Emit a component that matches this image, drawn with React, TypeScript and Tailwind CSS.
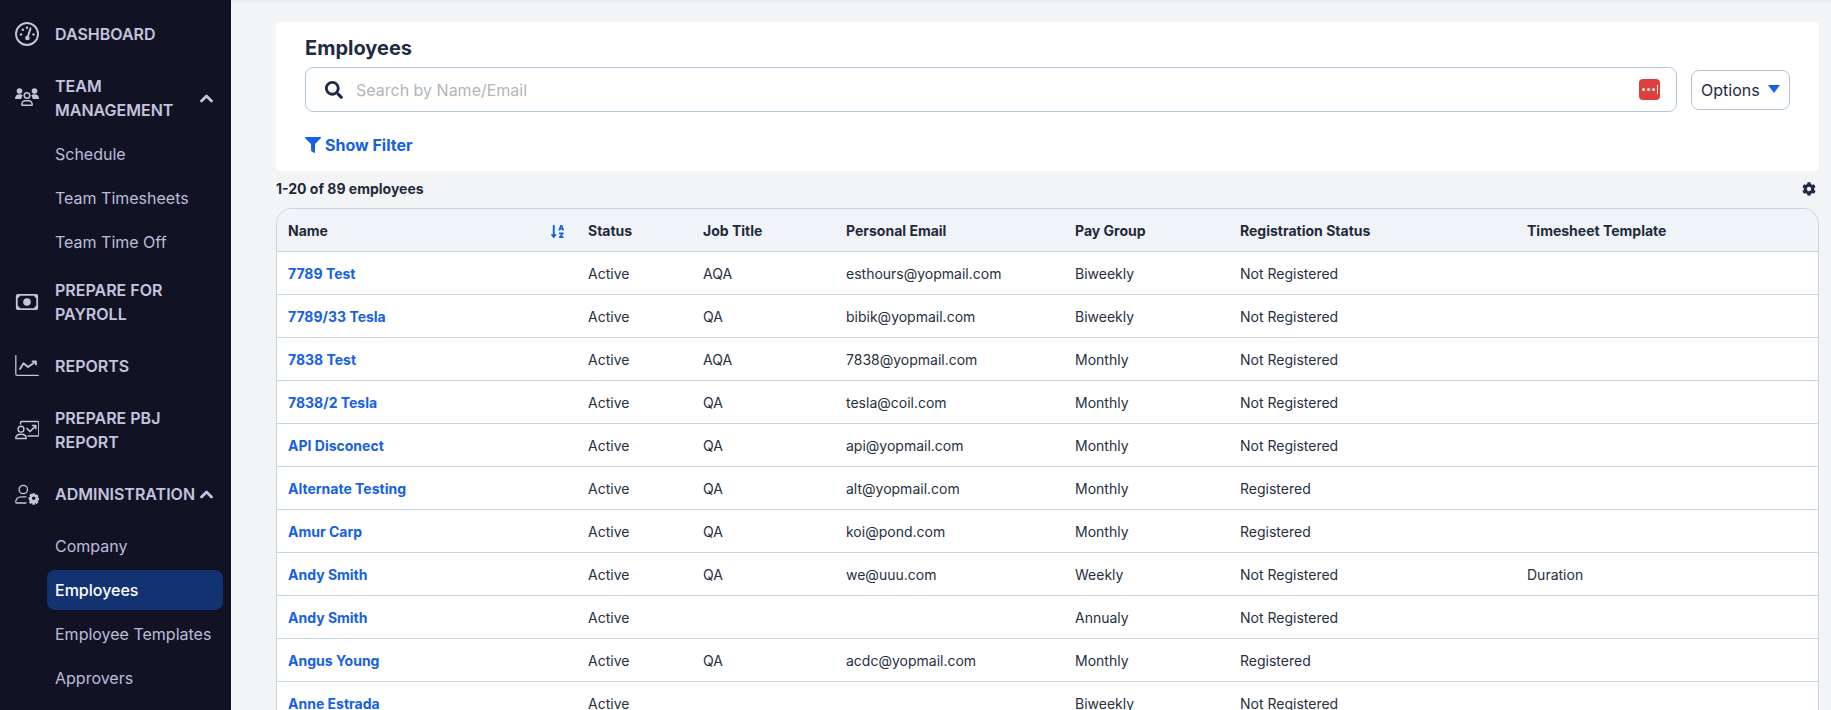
import React from 'react';
import { FaSearch, FaFilter, FaCog, FaSortAlphaDown } from 'react-icons/fa';

const font = { fontFamily: 'Inter, sans-serif' };

const DashboardIcon = () => (
  <svg viewBox="0 0 24 24" className="w-6 h-6 shrink-0" fill="none" stroke="currentColor" strokeWidth="1.9" strokeLinecap="round">
    <circle cx="12" cy="12" r="11" />
    <path d="M15.500 6.500 13 14" strokeWidth="2" />
    <circle cx="12.400" cy="16" r="2.300" fill="currentColor" stroke="none" />
    <circle cx="6" cy="12.500" r="1.200" fill="currentColor" stroke="none" />
    <circle cx="7.800" cy="7.800" r="1.200" fill="currentColor" stroke="none" />
    <circle cx="12" cy="5.800" r="1.200" fill="currentColor" stroke="none" />
    <circle cx="18.500" cy="12.500" r="1.200" fill="currentColor" stroke="none" />
  </svg>
);

const TeamIcon = () => (
  <svg viewBox="0 0 24 24" className="w-6 h-6 shrink-0" fill="none" stroke="currentColor" strokeWidth="1.500">
    <circle cx="4.500" cy="5" r="2.800" fill="currentColor" stroke="none" />
    <circle cx="19.500" cy="5" r="2.800" fill="currentColor" stroke="none" />
    <path d="M0 13c0-3 1.500-4.800 4.500-4.800 1.500 0 2.500.5 3.200 1.400-.8.8-1.200 2-1.400 3.400z" fill="currentColor" stroke="none" />
    <path d="M24 13c0-3-1.500-4.800-4.500-4.800-1.500 0-2.500.5-3.200 1.400.8.8 1.200 2 1.400 3.400z" fill="currentColor" stroke="none" />
    <circle cx="12" cy="9.500" r="2.800" />
    <path d="M6.800 18.800c0-2.500 1.800-4 3.600-4h3.200c1.800 0 3.600 1.500 3.600 4 0 .3-.2.500-.5.500H7.300c-.3 0-.5-.2-.5-.5z" />
  </svg>
);

const MoneyIcon = () => (
  <svg viewBox="0 0 24 24" className="w-6 h-6 shrink-0" fill="none" stroke="currentColor" strokeWidth="1.800">
    <rect x="1.800" y="4.900" width="20.400" height="14.200" rx="1" />
    <path d="M1.800 8c1.700 0 2.800-1.200 2.800-3.100H1.800zM22.200 8c-1.700 0-2.800-1.200-2.800-3.100h2.800zM1.800 16c1.700 0 2.800 1.200 2.800 3.100H1.800zM22.200 16c-1.700 0-2.800 1.200-2.800 3.100h2.800z" fill="currentColor" strokeWidth="0.500" />
    <circle cx="12" cy="12" r="3.800" fill="currentColor" stroke="none" />
  </svg>
);

const ReportsIcon = () => (
  <svg viewBox="0 0 24 24" className="w-6 h-6 shrink-0" fill="none" stroke="currentColor" strokeWidth="1.300" strokeLinecap="round" strokeLinejoin="round">
    <path d="M.8 1.700v18.300c0 .8.5 1.300 1.300 1.300h21.300" />
    <path d="M5 15 8.500 9.200 13 13l7.500-5.300" strokeWidth="1.800" />
    <path d="M17.500 7.300h3.500v3.200" strokeWidth="1.800" />
  </svg>
);

const PbjIcon = () => (
  <svg viewBox="0 0 24 24" className="w-6 h-6 shrink-0" fill="none" stroke="currentColor" strokeWidth="1.400" strokeLinecap="round" strokeLinejoin="round">
    <circle cx="6" cy="11.200" r="2.900" />
    <path d="M.7 20.500c0-2.800 1.800-4.200 5.300-4.200s5.300 1.400 5.300 4.200z" />
    <path d="M5.500 6V4.500c0-.6.400-1 1-1h16.300c.6 0 1 .4 1 1v12.500c0 .6-.4 1-1 1H13" />
    <path d="M12 10.500l3 3 5.500-5.500" strokeWidth="1.700" />
    <path d="M17.500 7.500h3.300v3.300" strokeWidth="1.500" />
  </svg>
);

const AdminIcon = () => (
  <svg viewBox="0 0 24 24" className="w-6 h-6 shrink-0" fill="none" stroke="currentColor" strokeWidth="1.300" strokeLinecap="round" strokeLinejoin="round">
    <circle cx="8.300" cy="7.500" r="4.200" />
    <path d="M.7 20c0-3 2.500-5.200 5.300-5.200h5M.7 20c0 .6.400 1 1 1H11" />
    <g transform="translate(18.700 16.300)" fill="currentColor" stroke="none">
      <path d="M-1.200-5h2.400l.4 1.600 1.500-.7 1.600 1.700-.8 1.500 1.600.5v2.400l-1.600.4.800 1.500-1.600 1.700-1.500-.8-.4 1.700h-2.400l-.4-1.700-1.500.8-1.600-1.700.8-1.500L-5.100 1.300v-2.400l1.600-.5-.8-1.500 1.600-1.700 1.500.7z" />
      <circle r="1.700" fill="#111325" />
    </g>
  </svg>
);

const ChevronIcon = () => (
  <svg viewBox="0 0 13 10" className="w-[13px] h-[10px] shrink-0" fill="none" stroke="currentColor" strokeWidth="2.800" strokeLinecap="round" strokeLinejoin="round">
    <path d="M1.500 8 6.500 3l5 5" />
  </svg>
);

const LastPassIcon = () => (
  <span className="flex items-center justify-center gap-[2px] w-[21px] h-[21px] rounded-[4px] bg-[#dd403c]">
    <span className="w-[3px] h-[3px] rounded-full bg-white" />
    <span className="w-[3px] h-[3px] rounded-full bg-white" />
    <span className="w-[3px] h-[3px] rounded-full bg-white" />
    <span className="w-px h-[9px] bg-white" />
  </span>
);

type TopItemProps = {
  icon: React.ReactNode;
  label: React.ReactNode;
  chevron?: boolean;
  className?: string;
};

const TopItem: React.FC<TopItemProps> = ({ icon, label, chevron, className = '' }) => (
  <div className={`flex items-center pl-[15px] pr-[18px] py-[10px] text-[#c4c4de] ${className}`}>
    {icon}
    <div className="ml-4 flex-1 text-base leading-6 font-semibold uppercase">{label}</div>
    {chevron && <ChevronIcon />}
  </div>
);

const SubItem: React.FC<{ label: string; active?: boolean; className?: string }> = ({ label, active, className = '' }) => (
  <div className={`ml-[47px] mr-2 h-10 flex items-center px-2 rounded-lg text-base ${active ? 'bg-[#123272] text-white font-medium' : 'text-[#bcbcda]'} ${className}`}>
    {label}
  </div>
);

const Sidebar = () => (
  <aside className="w-[231px] shrink-0 bg-[#111325] pt-3">
    <TopItem icon={<DashboardIcon />} label="Dashboard" />
    <TopItem icon={<TeamIcon />} label="Team Management" chevron className="mt-2" />
    <SubItem label="Schedule" className="mt-[2px]" />
    <SubItem label="Team Timesheets" className="mt-1" />
    <SubItem label="Team Time Off" className="mt-1" />
    <TopItem icon={<MoneyIcon />} label="Prepare for Payroll" className="mt-[6px]" />
    <TopItem icon={<ReportsIcon />} label="Reports" className="mt-2" />
    <TopItem icon={<PbjIcon />} label="Prepare PBJ Report" className="mt-2" />
    <TopItem icon={<AdminIcon />} label="Administration" chevron className="mt-2" />
    <SubItem label="Company" className="mt-[10px]" />
    <SubItem label="Employees" active className="mt-1" />
    <SubItem label="Employee Templates" className="mt-1" />
    <SubItem label="Approvers" className="mt-1" />
  </aside>
);

const employees = [
  ['7789 Test', 'Active', 'AQA', 'esthours@yopmail.com', 'Biweekly', 'Not Registered', ''],
  ['7789/33 Tesla', 'Active', 'QA', 'bibik@yopmail.com', 'Biweekly', 'Not Registered', ''],
  ['7838 Test', 'Active', 'AQA', '7838@yopmail.com', 'Monthly', 'Not Registered', ''],
  ['7838/2 Tesla', 'Active', 'QA', 'tesla@coil.com', 'Monthly', 'Not Registered', ''],
  ['API Disconect', 'Active', 'QA', 'api@yopmail.com', 'Monthly', 'Not Registered', ''],
  ['Alternate Testing', 'Active', 'QA', 'alt@yopmail.com', 'Monthly', 'Registered', ''],
  ['Amur Carp', 'Active', 'QA', 'koi@pond.com', 'Monthly', 'Registered', ''],
  ['Andy Smith', 'Active', 'QA', 'we@uuu.com', 'Weekly', 'Not Registered', 'Duration'],
  ['Andy Smith', 'Active', '', '', 'Annualy', 'Not Registered', ''],
  ['Angus Young', 'Active', 'QA', 'acdc@yopmail.com', 'Monthly', 'Registered', ''],
  ['Anne Estrada', 'Active', '', '', 'Biweekly', 'Not Registered', ''],
];

const gridCols = 'grid grid-cols-[300px_115px_143px_229px_165px_287px_1fr] pl-[11px]';

const EmployeeTable = () => (
  <div className="border border-b-0 border-[#c5d5e4] rounded-t-2xl bg-white">
    <div className={`${gridCols} h-[43px] pt-[2px] items-center bg-[#f0f3f7] rounded-t-2xl text-sm font-bold text-[#1f2a3c] border-b border-[#c5d5e4]`}>
      <div className="flex items-center justify-between pr-[23px]">
        Name
        <FaSortAlphaDown className="w-[15px] h-[15px] text-[#1660d8]" />
      </div>
      <div>Status</div>
      <div>Job Title</div>
      <div>Personal Email</div>
      <div>Pay Group</div>
      <div>Registration Status</div>
      <div>Timesheet Template</div>
    </div>
    {employees.map((row, i) => (
      <div key={i} className={`${gridCols} h-[43px] pt-[2px] items-center text-sm text-[#263040] border-b border-[#c5d5e4]`}>
        <div className="font-bold text-[#1660e4]">{row[0]}</div>
        {row.slice(1).map((cell, j) => (
          <div key={j}>{cell}</div>
        ))}
      </div>
    ))}
  </div>
);

export default function App() {
  return (
    <div className="flex h-[710px] overflow-hidden bg-[#f3f4f6]" style={font}>
      <Sidebar />
      <main className="flex-1 min-w-0 flex flex-col">
        <div className="h-[5px] shrink-0 bg-gradient-to-b from-[#ebecee] to-[#f3f4f6]" />
        <div className="pl-[45px] pr-3 pt-[17px]">
          <section className="bg-white rounded px-[29px] pt-[13px] h-[149px]">
            <h1 className="text-xl leading-[26px] font-bold text-[#1f2a44]">Employees</h1>
            <div className="flex items-center mt-[6px] gap-[14px]">
              <div className="flex-1 h-[45px] flex items-center border border-[#b4c7da] rounded-lg pl-[19px] pr-4">
                <FaSearch className="w-[18px] h-[18px] text-[#1f2a44]" />
                <span className="ml-[13px] flex-1 text-base text-[#b3b5ba]">Search by Name/Email</span>
                <LastPassIcon />
              </div>
              <div className="w-[99px] h-10 flex items-center pl-[9px] gap-2 border border-[#b4c7da] rounded-lg text-base text-[#1f2a44]">
                Options
                <svg viewBox="0 0 12 8" className="w-3 h-2 mb-[2px] text-[#1660e4]" fill="currentColor">
                  <path d="M0 0h12L6 8z" />
                </svg>
              </div>
            </div>
            <div className="flex items-center mt-[21px] text-[#1660e4] text-base font-bold">
              <FaFilter className="w-4 h-4 mr-[4px]" />
              Show Filter
            </div>
          </section>
          <div className="flex items-center justify-between h-[37px] pb-[2px] pr-[3px] text-sm font-bold text-[#1f2a3c]">
            <span>1-20 of 89 employees</span>
            <FaCog className="w-[14px] h-[14px] text-[#1f2a44]" />
          </div>
          <EmployeeTable />
        </div>
      </main>
    </div>
  );
}
